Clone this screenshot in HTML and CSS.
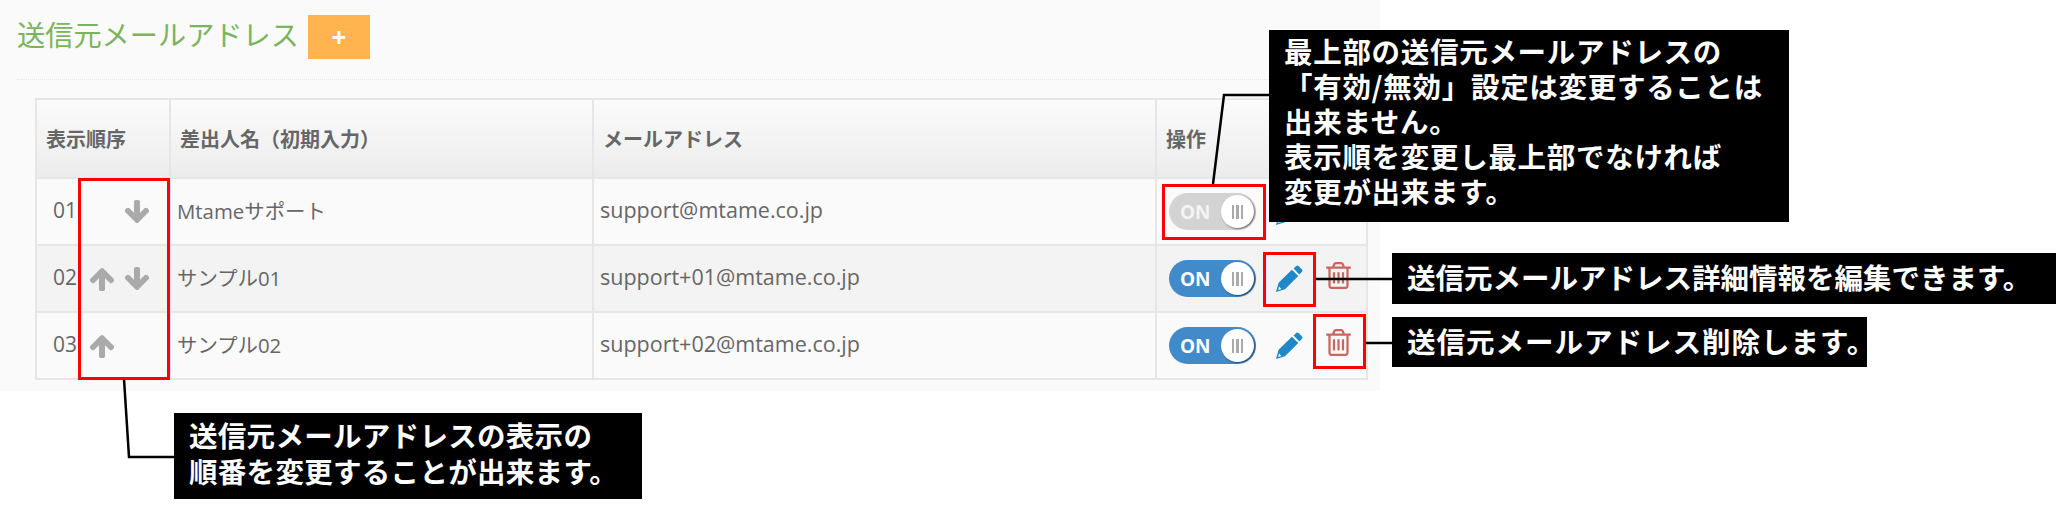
FILE: index.html
```html
<!DOCTYPE html>
<html lang="ja">
<head>
<meta charset="UTF-8">
<title>送信元メールアドレス</title>
<link rel="stylesheet" href="styles.css">
</head>
<body>
<svg class="icon-defs" width="0" height="0">
	<symbol id="i-arrow" viewBox="128 128 1536 1536"><path d="M1675 971q0 51-37 90l-75 75q-38 38-91 38-54 0-90-38l-294-293v704q0 52-37.5 84.5t-90.5 32.5h-128q-53 0-90.5-32.5t-37.5-84.5v-704l-294 293q-36 38-90 38t-90-38l-75-75q-38-38-38-90 0-53 38-91l651-651q35-37 90-37 54 0 91 37l651 651q37 39 37 91z"/></symbol>
	<symbol id="i-pencil" viewBox="0 0 28 28"><path d="M18.6 3.6l2.6-2.6q1.2-1 2.4 0l3.4 3.4q1 1.2 0 2.4l-2.6 2.6z"/><path fill-rule="evenodd" d="M1 27l2.6-9.2L16.9 4.7l6.4 6.4L10 24.2zM4.1 21.6l-1 3.3 3.3-1z"/></symbol>
	<symbol id="i-trash" viewBox="192 128 1408 1536"><path d="M704 736v576q0 14-9 23t-23 9h-64q-14 0-23-9t-9-23v-576q0-14 9-23t23-9h64q14 0 23 9t9 23zm256 0v576q0 14-9 23t-23 9h-64q-14 0-23-9t-9-23v-576q0-14 9-23t23-9h64q14 0 23 9t9 23zm256 0v576q0 14-9 23t-23 9h-64q-14 0-23-9t-9-23v-576q0-14 9-23t23-9h64q14 0 23 9t9 23zm128 724v-948h-896v948q0 22 7 40.5t14.5 27 10.5 8.5h832q3 0 10.5-8.5t14.5-27 7-40.5zm-672-1076h448l-48-117q-7-9-17-11h-317q-10 2-17 11zm928 32v64q0 14-9 23t-23 9h-96v948q0 83-47 143.5t-113 60.5h-832q-66 0-113-58.5t-47-141.5v-952h-96q-14 0-23-9t-9-23v-64q0-14 9-23t23-9h309l70-167q15-37 54-63t79-26h320q40 0 79 26t54 63l70 167h309q14 0 23 9t9 23z"/></symbol>
</svg>

<div class="panel">
	<div class="title-row">
		<h2 class="title">送信元メールアドレス</h2>
		<button class="add-btn">+</button>
	</div>
	<table class="list">
		<colgroup>
			<col class="col-order">
			<col class="col-name">
			<col class="col-mail">
			<col class="col-ops">
		</colgroup>
		<thead>
			<tr>
				<th>表示順序</th>
				<th>差出人名（初期入力）</th>
				<th>メールアドレス</th>
				<th>操作</th>
			</tr>
		</thead>
		<tbody>
			<tr>
				<td><div class="order"><span class="num">01</span><span class="slot"></span><svg class="arrow down"><use href="#i-arrow"/></svg></div></td>
				<td class="name">Mtameサポート</td>
				<td class="mail">support@mtame.co.jp</td>
				<td><div class="ops">
					<div class="toggle off"><span class="on-label">ON</span><span class="knob"><i></i><i></i><i></i></span></div>
					<svg class="pencil"><use href="#i-pencil"/></svg>
				</div></td>
			</tr>
			<tr class="alt">
				<td><div class="order"><span class="num">02</span><svg class="arrow"><use href="#i-arrow"/></svg><svg class="arrow down"><use href="#i-arrow"/></svg></div></td>
				<td class="name">サンプル01</td>
				<td class="mail">support+01@mtame.co.jp</td>
				<td><div class="ops">
					<div class="toggle"><span class="on-label">ON</span><span class="knob"><i></i><i></i><i></i></span></div>
					<svg class="pencil"><use href="#i-pencil"/></svg>
					<svg class="trash"><use href="#i-trash"/></svg>
				</div></td>
			</tr>
			<tr>
				<td><div class="order"><span class="num">03</span><svg class="arrow"><use href="#i-arrow"/></svg></div></td>
				<td class="name">サンプル02</td>
				<td class="mail">support+02@mtame.co.jp</td>
				<td><div class="ops">
					<div class="toggle"><span class="on-label">ON</span><span class="knob"><i></i><i></i><i></i></span></div>
					<svg class="pencil"><use href="#i-pencil"/></svg>
					<svg class="trash"><use href="#i-trash"/></svg>
				</div></td>
			</tr>
		</tbody>
	</table>
</div>

<!-- annotations drawn over the screenshot -->
<svg class="leaders" width="2068" height="508">
	<polyline points="124,379 129,457 174,457"/>
	<polyline points="1213,184 1224,95 1269,95"/>
	<polyline points="1316,279 1392,279"/>
	<polyline points="1366,343 1392,343"/>
</svg>

<div class="mark mark-arrows"></div>
<div class="mark mark-toggle"></div>
<div class="mark mark-edit"></div>
<div class="mark mark-trash"></div>

<div class="note note-toggle">最上部の送信元メールアドレスの<br>「有効/無効」設定は変更することは<br>出来ません。<br>表示順を変更し最上部でなければ<br>変更が出来ます。</div>
<div class="note note-edit">送信元メールアドレス詳細情報を編集できます。</div>
<div class="note note-trash">送信元メールアドレス削除します。</div>
<div class="note note-arrows">送信元メールアドレスの表示の<br>順番を変更することが出来ます。</div>
</body>
</html>
```

FILE: styles.css
```css
html, body {
	margin: 0;
	padding: 0;
}

body {
	position: relative;
	width: 2068px;
	height: 508px;
	overflow: hidden;
	background-color: #fff;
	color: #666;
	font-family: "Open Sans", "Noto Sans CJK JP", sans-serif;
	font-size: 20px;
}

.icon-defs {
	position: absolute;
}

.panel {
	width: 1380px;
	height: 391px;
	box-sizing: border-box;
	padding: 15px 13px 0 17px;
	background-color: #fafafa;
}

.title-row {
	display: flex;
	align-items: center;
	gap: 9px;
	height: 44px;
	padding-bottom: 20px;
	border-bottom: 1px dotted #e6e6e6;
}

.title {
	margin: 0 0 3px;
	color: #7cb35d;
	font-size: 28.2px;
	font-weight: 400;
	line-height: 41px;
}

.add-btn {
	width: 62px;
	height: 44px;
	padding: 0;
	border: none;
	background-color: #ffb44f;
	color: #fff;
	font-family: "Open Sans", sans-serif;
	font-size: 26px;
	font-weight: 700;
}

.list {
	width: 1331px;
	margin: 18px 0 0 18px;
	table-layout: fixed;
	border-collapse: collapse;
}

.col-order { width: 134px; }
.col-name { width: 423px; }
.col-mail { width: 563px; }
.col-ops { width: 211px; }

.list th, .list td {
	border: 2px solid #e6e6e6;
	padding: 0 5px;
	text-align: left;
}

.list th {
	height: 77px;
	padding: 0 9px;
	background: linear-gradient(#fbfbfb, #ececec);
	font-size: 20px;
	font-weight: 700;
}

.list td {
	height: 65px;
}

.list td.name, .list td.mail {
	height: 61px;
	padding: 0 6px 4px;
}

.list td.name {
	font-size: 20.4px;
}

.list td.mail {
	font-size: 21.5px;
}

.list .alt td {
	background-color: #f3f3f3;
}

.order {
	display: flex;
	align-items: center;
	padding-left: 11px;
	font-size: 20px;
}

.num {
	width: 37px;
	margin-bottom: 3px;
	font-size: 21px;
}

.slot {
	width: 24px;
	margin-right: 11px;
}

.arrow {
	width: 24px;
	height: 24px;
	margin-right: 11px;
	fill: #aaa;
}

.arrow.down {
	transform: rotate(180deg);
}

.ops {
	display: flex;
	align-items: center;
	padding-left: 7px;
}

.toggle {
	display: flex;
	align-items: center;
	justify-content: space-between;
	box-sizing: border-box;
	width: 87px;
	height: 37px;
	padding: 0 2px 0 11px;
	border-radius: 19px;
	background-color: #428bca;
	color: #fff;
}

.toggle.off {
	background-color: #d3d3d3;
	color: #f4f4f4;
}

.on-label {
	font-size: 19px;
	font-weight: 700;
}

.knob {
	display: flex;
	align-items: center;
	justify-content: center;
	gap: 2px;
	width: 33px;
	height: 33px;
	border-radius: 50%;
	background-color: #fff;
	box-shadow: 1px 1px 2px rgba(0, 0, 0, 0.5);
}

.knob i {
	width: 2.5px;
	height: 14px;
	background-color: #aaa;
}

.pencil {
	width: 28px;
	height: 28px;
	margin-left: 19px;
	fill: #1f88c9;
}

.trash {
	width: 25px;
	height: 27px;
	margin: 0 0 6px 23px;
	fill: #c9665e;
}

/* annotations */
.leaders {
	position: absolute;
	top: 0;
	left: 0;
}

.leaders polyline {
	fill: none;
	stroke: #000;
	stroke-width: 2.5;
}

.mark {
	position: absolute;
	box-sizing: border-box;
	border: 3px solid #f00;
}

.mark-arrows { left: 78px; top: 178px; width: 92px; height: 202px; }
.mark-toggle { left: 1162px; top: 184px; width: 104px; height: 56px; }
.mark-edit { left: 1263px; top: 252px; width: 53px; height: 55px; }
.mark-trash { left: 1313px; top: 314px; width: 53px; height: 55px; }

.note {
	position: absolute;
	box-sizing: border-box;
	background-color: #000;
	color: #fff;
	font-family: "Noto Sans CJK JP", sans-serif;
	font-size: 28.5px;
	font-weight: 700;
	white-space: nowrap;
}

.note-toggle {
	left: 1269px;
	top: 30px;
	width: 520px;
	height: 192px;
	padding: 3px 0 0 15px;
	line-height: 35px;
	letter-spacing: 0.7px;
}

.note-edit {
	left: 1392px;
	top: 253px;
	width: 664px;
	height: 51px;
	padding-left: 15px;
	line-height: 48px;
}

.note-trash {
	left: 1392px;
	top: 317px;
	width: 475px;
	height: 50px;
	padding-left: 15px;
	line-height: 47px;
	letter-spacing: 1px;
}

.note-arrows {
	left: 174px;
	top: 413px;
	width: 468px;
	height: 86px;
	padding: 4px 0 0 15px;
	line-height: 36px;
	letter-spacing: 0.3px;
}
```
